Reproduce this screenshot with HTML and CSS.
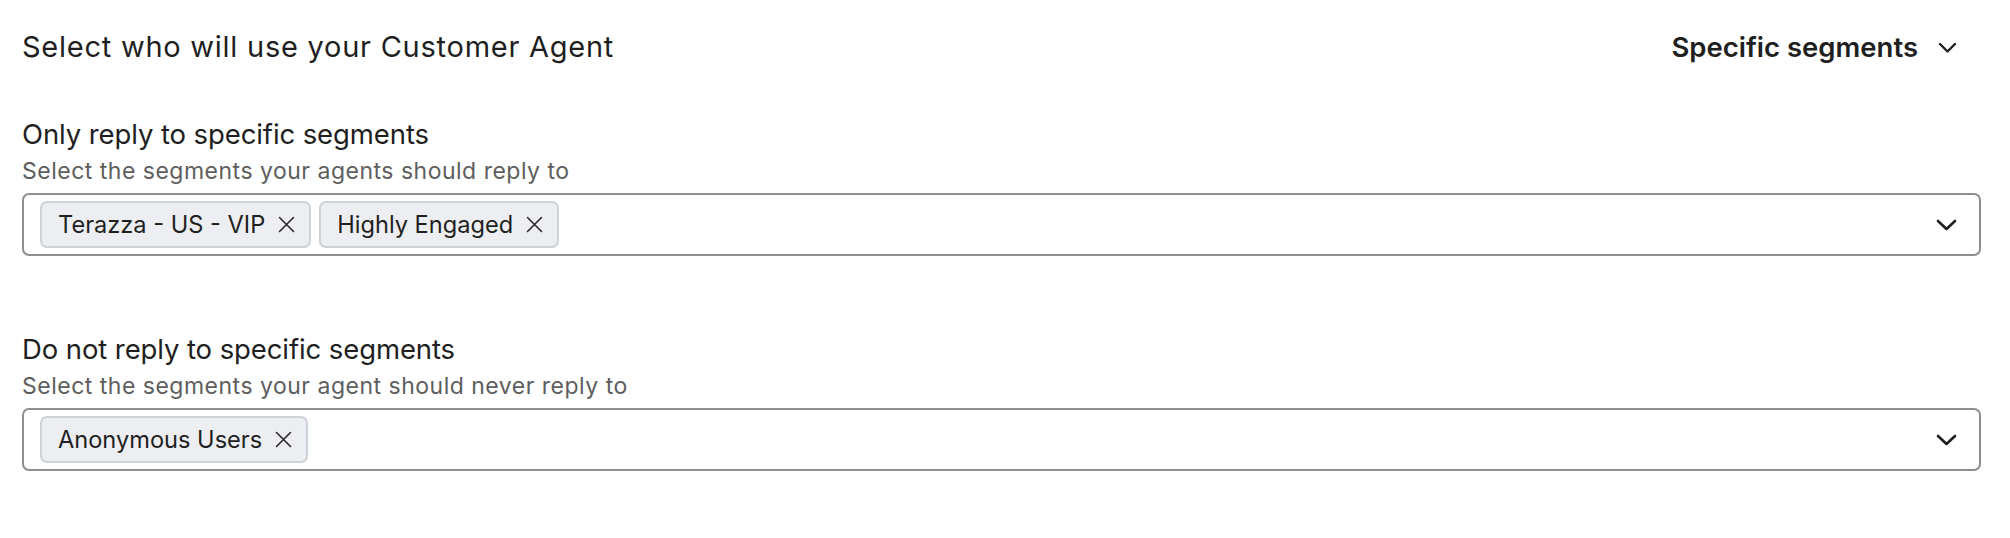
FILE: index.html
```html
<!DOCTYPE html>
<html lang="en">
<head>
    <meta charset="UTF-8">
    <meta name="viewport" content="width=device-width, initial-scale=1.0">
    <title>Customer Agent audience</title>
    <link rel="stylesheet" href="styles.css">
</head>
<body>

    <div class="page">
        <div class="header">
            <h1>Select who will use your Customer Agent</h1>
            <button class="mode-select">
                Specific segments
                <svg class="chevron-sm" width="19" height="11" viewBox="0 0 19 11"><path d="M2 2l7.5 7.5L17 2" fill="none" stroke="#1f1f1f" stroke-width="2.4" stroke-linecap="round" stroke-linejoin="round"/></svg>
            </button>
        </div>

        <div class="field field-first">
            <div class="field-label">Only reply to specific segments</div>
            <div class="field-hint">Select the segments your agents should reply to</div>
            <div class="multi-select">
                <div class="tags">
                    <span class="tag">Terazza - US - VIP
                        <svg class="tag-x" width="17" height="17" viewBox="0 0 17 17"><path d="M1.5 1.5l14 14M15.5 1.5l-14 14" stroke="#2a2a2a" stroke-width="1.6" stroke-linecap="round"/></svg>
                    </span>
                    <span class="tag">Highly Engaged
                        <svg class="tag-x" width="17" height="17" viewBox="0 0 17 17"><path d="M1.5 1.5l14 14M15.5 1.5l-14 14" stroke="#2a2a2a" stroke-width="1.6" stroke-linecap="round"/></svg>
                    </span>
                </div>
                <svg class="chevron" width="21" height="12" viewBox="0 0 21 12"><path d="M2 2l8.5 8L19 2" fill="none" stroke="#1f1f1f" stroke-width="2.6" stroke-linecap="round" stroke-linejoin="round"/></svg>
            </div>
        </div>

        <div class="field field-second">
            <div class="field-label">Do not reply to specific segments</div>
            <div class="field-hint">Select the segments your agent should never reply to</div>
            <div class="multi-select">
                <div class="tags">
                    <span class="tag">Anonymous Users
                        <svg class="tag-x" width="17" height="17" viewBox="0 0 17 17"><path d="M1.5 1.5l14 14M15.5 1.5l-14 14" stroke="#2a2a2a" stroke-width="1.6" stroke-linecap="round"/></svg>
                    </span>
                </div>
                <svg class="chevron" width="21" height="12" viewBox="0 0 21 12"><path d="M2 2l8.5 8L19 2" fill="none" stroke="#1f1f1f" stroke-width="2.6" stroke-linecap="round" stroke-linejoin="round"/></svg>
            </div>
        </div>
    </div>

</body>
</html>
```

FILE: styles.css
```css
body {
    font-family: 'Inter', 'Noto Sans', sans-serif;
    background-color: #fff;
    color: #1f1f1f;
    margin: 0;
    padding: 0;
}

.page {
    padding: 27px 29px 0 22px;
}

.header {
    display: flex;
    justify-content: space-between;
    align-items: center;
    height: 40px;
    padding-right: 24px;
}

h1 {
    font-size: 29px;
    font-weight: 400;
    line-height: 40px;
    margin: 0;
    letter-spacing: 0.75px;
}

.mode-select {
    display: flex;
    align-items: center;
    gap: 20px;
    background: none;
    border: none;
    padding: 0;
    font-family: inherit;
    font-size: 27.5px;
    font-weight: 600;
    color: #1f1f1f;
    cursor: pointer;
}

.field-first {
    margin-top: 49px;
}

.field-second {
    margin-top: 75px;
}

.field-label {
    font-size: 27.5px;
    line-height: 36px;
    letter-spacing: -0.1px;
}

.field-hint {
    font-size: 23px;
    line-height: 30px;
    color: #5e5e5e;
    margin-top: 4px;
    letter-spacing: 0.5px;
}

.multi-select {
    display: flex;
    align-items: center;
    justify-content: space-between;
    margin-top: 7px;
    padding: 6px 22px 6px 16px;
    border: 2px solid #8e8e8e;
    border-radius: 7px;
}

.tags {
    display: flex;
    gap: 8px;
}

.tag {
    display: flex;
    align-items: center;
    gap: 13px;
    height: 47px;
    box-sizing: border-box;
    padding: 0 14px 0 16px;
    background-color: #eceef1;
    border: 2px solid #cdd1d8;
    border-radius: 7px;
    font-size: 23.6px;
    color: #1f1f1f;
}

.tag-x {
    display: block;
}

.chevron {
    display: block;
}
```
